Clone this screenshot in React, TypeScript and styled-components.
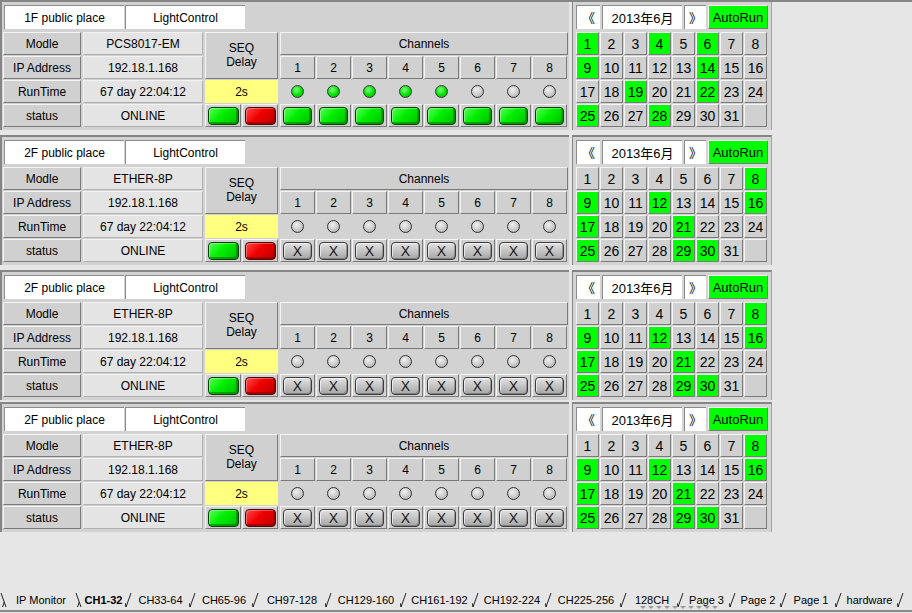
import React from "react";
import styled, { createGlobalStyle, css } from "styled-components";

const GlobalStyle = createGlobalStyle`
  html, body { margin: 0; padding: 0; background: #e6e6e6; }
  body {
    font-family: "Liberation Sans", Arial, "Noto Sans CJK SC", sans-serif;
    font-size: 12px;
    color: #000;
  }
`;

const raised = css`
  box-sizing: border-box;
  border: 1px solid;
  border-color: #f4f4f4 #7a7a7a #7a7a7a #f4f4f4;
`;

const Page = styled.div`
  width: 912px;
  height: 613px;
  box-sizing: border-box;
  border-top: 2px solid #858585;
  background: #e6e6e6;
  display: flex;
  flex-direction: column;
  overflow: hidden;
`;

const PanelList = styled.div`
  display: flex;
  flex-direction: column;
  margin-top: -2px;
`;

const PanelRow = styled.div<{ $gap: number }>`
  display: flex;
  gap: 3px;
  margin-top: ${(p) => p.$gap}px;
`;

const Device = styled.div`
  width: 569px;
  box-sizing: border-box;
  border-top: 2px solid #858585;
  border-left: 2px solid #858585;
  background: #d2d2d2;
  padding: 3px 1px 3px 1px;
  display: flex;
  flex-direction: column;
  gap: 3px;
`;

const TitleRow = styled.div`
  display: flex;
  gap: 1px;
  margin-left: 1px;
  height: 24px;
`;

const TitleCell = styled.div`
  width: 120px;
  box-sizing: border-box;
  background: #fff;
  border-left: 1px solid #8c8c8c;
  border-top: 1px solid #8c8c8c;
  display: flex;
  align-items: center;
  justify-content: center;
`;

const Body = styled.div`
  display: grid;
  grid-template-columns: 78px 120px 73px 288px;
  grid-template-rows: repeat(4, 23px);
  column-gap: 2px;
  row-gap: 1px;
`;

const Label = styled.div<{ $row: number }>`
  ${raised};
  grid-column: 1;
  grid-row: ${(p) => p.$row};
  background: #d0d0d0;
  display: flex;
  align-items: center;
  justify-content: center;
`;

const Value = styled.div<{ $row: number }>`
  box-sizing: border-box;
  grid-column: 2;
  grid-row: ${(p) => p.$row};
  background: #e4e4e4;
  border: 1px solid;
  border-color: #f2f2f2 #b0b0b0 #b0b0b0 #f2f2f2;
  display: flex;
  align-items: center;
  justify-content: center;
`;

const Seq = styled.div`
  ${raised};
  grid-column: 3;
  grid-row: 1 / span 2;
  background: #d0d0d0;
  display: flex;
  flex-direction: column;
  align-items: center;
  padding-top: 8px;
  line-height: 14px;
`;

const Delay = styled.div`
  grid-column: 3;
  grid-row: 3;
  background: #ffff80;
  display: flex;
  align-items: center;
  justify-content: center;
`;

const Pair = styled.div`
  grid-column: 3;
  grid-row: 4;
  display: grid;
  grid-template-columns: 36px 36px;
  gap: 1px;
`;

const BtnCell = styled.div`
  ${raised};
  background: #d0d0d0;
  display: flex;
  align-items: center;
  justify-content: center;
`;

const ChannelsHeader = styled.div`
  ${raised};
  grid-column: 4;
  grid-row: 1;
  background: #d0d0d0;
  display: flex;
  align-items: center;
  justify-content: center;
`;

const Strip = styled.div<{ $row: number }>`
  grid-column: 4;
  grid-row: ${(p) => p.$row};
  display: grid;
  grid-template-columns: repeat(8, 35px);
  gap: 1px;
`;

const NumCell = styled.div`
  ${raised};
  background: #d0d0d0;
  display: flex;
  align-items: center;
  justify-content: center;
`;

const LampCell = styled.div`
  display: flex;
  align-items: center;
  justify-content: center;
`;

const Lamp = styled.div<{ $on: boolean }>`
  width: 13px;
  height: 13px;
  box-sizing: border-box;
  border-radius: 50%;
  border: 1px solid #333;
  background: ${(p) =>
    p.$on
      ? "radial-gradient(circle at 40% 35%, #7dff7d 0%, #00e000 55%, #00a800 100%)"
      : "radial-gradient(circle at 40% 35%, #f0f0f0 0%, #cacaca 55%, #9a9a9a 100%)"};
`;

const SwitchCell = styled.div`
  ${raised};
  background: #d0d0d0;
  display: flex;
  align-items: center;
  justify-content: center;
`;

const Switch = styled.div<{ $kind: "green" | "red" | "off"; $w: number }>`
  width: ${(p) => p.$w}px;
  height: 18px;
  box-sizing: border-box;
  border-radius: 4px;
  display: flex;
  align-items: center;
  justify-content: center;
  font-size: 14px;
  color: #1a1a1a;
  ${(p) =>
    p.$kind === "green"
      ? css`
          background: linear-gradient(135deg, #55ff55 0%, #00ee00 45%, #00c000 100%);
          border: 1px solid #0b3d0b;
          box-shadow: inset -2px -2px 0 rgba(0, 110, 0, 0.55), inset 1px 1px 0 rgba(255, 255, 255, 0.35);
        `
      : p.$kind === "red"
      ? css`
          background: linear-gradient(135deg, #ff4a4a 0%, #ee0000 45%, #c00000 100%);
          border: 1px solid #4a0808;
          box-shadow: inset -2px -2px 0 rgba(120, 0, 0, 0.55), inset 1px 1px 0 rgba(255, 255, 255, 0.3);
        `
      : css`
          background: linear-gradient(180deg, #e2e2e2 0%, #c4c4c4 50%, #a6a6a6 100%);
          border: 1px solid #3c3c3c;
          box-shadow: inset -1px -1px 0 rgba(0, 0, 0, 0.25), inset 1px 1px 0 rgba(255, 255, 255, 0.6);
        `}
`;

const Calendar = styled.div`
  width: 200px;
  box-sizing: border-box;
  border-top: 2px solid #858585;
  border-left: 1px solid #858585;
  border-right: 1px solid #a4a4a4;
  background: #d4d4d4;
  padding: 3px;
  display: flex;
  flex-direction: column;
  gap: 3px;
`;

const CalTop = styled.div`
  display: flex;
  gap: 2px;
  height: 24px;
`;

const NavCell = styled.div<{ $w: number }>`
  width: ${(p) => p.$w}px;
  box-sizing: border-box;
  background: #fff;
  border-left: 1px solid #8c8c8c;
  border-top: 1px solid #8c8c8c;
  display: flex;
  align-items: center;
  justify-content: center;
  font-size: 13px;
  font-family: "Liberation Sans", "Noto Sans CJK SC", sans-serif;
`;

const AutoRun = styled.div`
  ${raised};
  width: 60px;
  background: #00ff00;
  display: flex;
  align-items: center;
  justify-content: center;
  font-size: 13px;
`;

const CalGrid = styled.div`
  display: grid;
  grid-template-columns: repeat(8, 23px);
  grid-template-rows: repeat(4, 23px);
  gap: 1px;
`;

const Day = styled.div<{ $on: boolean }>`
  ${raised};
  background: ${(p) => (p.$on ? "#00ff00" : "#d0d0d0")};
  display: flex;
  align-items: center;
  justify-content: center;
  font-size: 14px;
`;

const TabBar = styled.div`
  margin-top: auto;
  margin-bottom: 1px;
  height: 20px;
  display: flex;
  align-items: center;
  border-bottom: 2px solid #8a8a8a;
  position: relative;
  font-size: 11px;
`;

const Tab = styled.div<{ $w: number; $active: boolean }>`
  width: ${(p) => p.$w}px;
  height: 18px;
  display: flex;
  align-items: center;
  font-weight: ${(p) => (p.$active ? "bold" : "normal")};
  flex: none;
`;

const TabText = styled.span`
  flex: 1;
  text-align: center;
  white-space: nowrap;
`;

const Marks = styled.svg`
  position: absolute;
  left: 640px;
  top: 16px;
`;

const Sep = ({ back }: { back: boolean }) => (
  <svg width="7" height="16" viewBox="0 0 7 16" style={{ flex: "none" }}>
    {back ? (
      <>
        <line x1="1" y1="1" x2="6" y2="15" stroke="#222" strokeWidth="1" />
        <line x1="2.5" y1="15" x2="4.3" y2="10" stroke="#222" strokeWidth="1" />
      </>
    ) : (
      <>
        <line x1="1" y1="15" x2="6" y2="1" stroke="#222" strokeWidth="1" />
        <line x1="1" y1="15" x2="0" y2="11" stroke="#222" strokeWidth="1" />
      </>
    )}
  </svg>
);

type Panel = {
  place: string;
  model: string;
  lamps: boolean[];
  active: boolean;
  days: number[];
  gap: number;
};

const daysA = [1, 4, 6, 9, 14, 19, 22, 25, 28];
const daysB = [8, 9, 12, 16, 17, 21, 25, 29, 30];

const panels: Panel[] = [
  { place: "1F public place", model: "PCS8017-EM", lamps: [true, true, true, true, true, false, false, false], active: true, days: daysA, gap: 0 },
  { place: "2F public place", model: "ETHER-8P", lamps: Array(8).fill(false), active: false, days: daysB, gap: 5 },
  { place: "2F public place", model: "ETHER-8P", lamps: Array(8).fill(false), active: false, days: daysB, gap: 5 },
  { place: "2F public place", model: "ETHER-8P", lamps: Array(8).fill(false), active: false, days: daysB, gap: 2 },
];

const tabs: { label: string; w: number }[] = [
  { label: "IP Monitor", w: 75 },
  { label: "CH1-32", w: 50 },
  { label: "CH33-64", w: 64 },
  { label: "CH65-96", w: 63 },
  { label: "CH97-128", w: 73 },
  { label: "CH129-160", w: 75 },
  { label: "CH161-192", w: 72 },
  { label: "CH192-224", w: 73 },
  { label: "CH225-256", w: 75 },
  { label: "128CH", w: 57 },
  { label: "Page 3", w: 52 },
  { label: "Page 2", w: 51 },
  { label: "Page 1", w: 55 },
  { label: "hardware", w: 62 },
];

const labels = ["Modle", "IP Address", "RunTime", "status"];
const channels = [1, 2, 3, 4, 5, 6, 7, 8];

function DevicePanel({ p }: { p: Panel }) {
  const values = [p.model, "192.18.1.168", "67 day 22:04:12", "ONLINE"];
  return (
    <Device>
      <TitleRow>
        <TitleCell>{p.place}</TitleCell>
        <TitleCell>LightControl</TitleCell>
      </TitleRow>
      <Body>
        {labels.map((l, i) => (
          <Label key={l} $row={i + 1}>{l}</Label>
        ))}
        {values.map((v, i) => (
          <Value key={i} $row={i + 1}>{v}</Value>
        ))}
        <Seq>
          <span>SEQ</span>
          <span>Delay</span>
        </Seq>
        <Delay>2s</Delay>
        <Pair>
          <BtnCell>
            <Switch $kind="green" $w={31} />
          </BtnCell>
          <BtnCell>
            <Switch $kind="red" $w={31} />
          </BtnCell>
        </Pair>
        <ChannelsHeader>Channels</ChannelsHeader>
        <Strip $row={2}>
          {channels.map((c) => (
            <NumCell key={c}>{c}</NumCell>
          ))}
        </Strip>
        <Strip $row={3}>
          {p.lamps.map((on, i) => (
            <LampCell key={i}>
              <Lamp $on={on} />
            </LampCell>
          ))}
        </Strip>
        <Strip $row={4}>
          {channels.map((c) => (
            <SwitchCell key={c}>
              <Switch $kind={p.active ? "green" : "off"} $w={29}>
                {p.active ? "" : "X"}
              </Switch>
            </SwitchCell>
          ))}
        </Strip>
      </Body>
    </Device>
  );
}

function CalendarPanel({ days }: { days: number[] }) {
  const cells = Array.from({ length: 32 }, (_, i) => i + 1);
  return (
    <Calendar>
      <CalTop>
        <NavCell $w={24}>《</NavCell>
        <NavCell $w={80}>2013年6月</NavCell>
        <NavCell $w={22}>》</NavCell>
        <AutoRun>AutoRun</AutoRun>
      </CalTop>
      <CalGrid>
        {cells.map((d) => (
          <Day key={d} $on={days.includes(d)}>
            {d <= 31 ? d : ""}
          </Day>
        ))}
      </CalGrid>
    </Calendar>
  );
}

export default function App() {
  const activeIdx = 1;
  return (
    <>
      <GlobalStyle />
      <Page>
        <PanelList>
          {panels.map((p, i) => (
            <PanelRow key={i} $gap={p.gap}>
              <DevicePanel p={p} />
              <CalendarPanel days={p.days} />
            </PanelRow>
          ))}
        </PanelList>
        <TabBar>
          {tabs.map((t, i) => (
            <Tab key={t.label} $w={t.w} $active={i === activeIdx}>
              <Sep back={i <= activeIdx} />
              <TabText>{t.label}</TabText>
            </Tab>
          ))}
          <Sep back={false} />
          <Marks width="80" height="4" viewBox="0 0 80 4">
            {Array.from({ length: 10 }, (_, i) => (
              <polygon key={i} points={`${i * 8},0 ${i * 8 + 6},0 ${i * 8 + 3},3`} fill="#9a9a9a" />
            ))}
          </Marks>
        </TabBar>
      </Page>
    </>
  );
}
